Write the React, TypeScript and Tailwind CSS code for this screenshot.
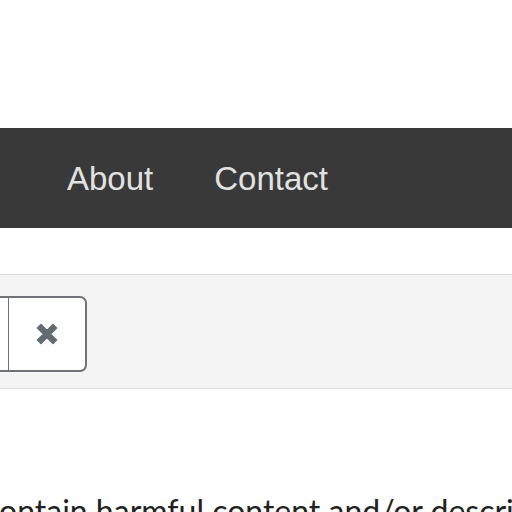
import React from 'react';

const navItems = ['About', 'Contact'];

export default function App() {
    return (
        <div className="w-[512px] h-[512px] overflow-hidden bg-white" style={{ fontFamily: '"Liberation Sans", Arial, sans-serif' }}>
            <div className="h-[128px]" />
            <nav className="h-[100px] bg-[#393939] flex items-center pl-[67px] gap-[61px]">
                {navItems.map(item => (
                    <a key={item} className="text-[33px] leading-none text-[#e2e2e2] pt-[1px]">{item}</a>
                ))}
            </nav>
            <div className="h-[46px]" />
            <div className="h-[115px] bg-[#f4f4f4] border-y border-[#dcdcdc] flex items-center">
                <div className="flex h-[76px] mt-[4px]">
                    <div className="w-[9px] border-y-2 border-r border-[#6f7377] bg-white" />
                    <button className="w-[78px] bg-white border-2 border-l-0 border-[#6f7377] rounded-r-[7px] flex items-center justify-center text-[#636a71]">
                        <svg width="24" height="24" viewBox="0 0 24 24">
                            <path d="M2.5 6 L6 2.5 L12 8.5 L18 2.5 L21.5 6 L15.5 12 L21.5 18 L18 21.5 L12 15.5 L6 21.5 L2.5 18 L8.5 12 Z" fill="currentColor" stroke="currentColor" strokeWidth="1.5" strokeLinejoin="round" />
                        </svg>
                    </button>
                </div>
            </div>
            <div className="h-[106px]" />
            <p className="whitespace-nowrap text-[32px] leading-none text-[#222] -ml-[16px]" style={{ fontFamily: 'Lato, "Liberation Sans", sans-serif' }}>
                contain harmful content and/or description
            </p>
        </div>
    );
}
